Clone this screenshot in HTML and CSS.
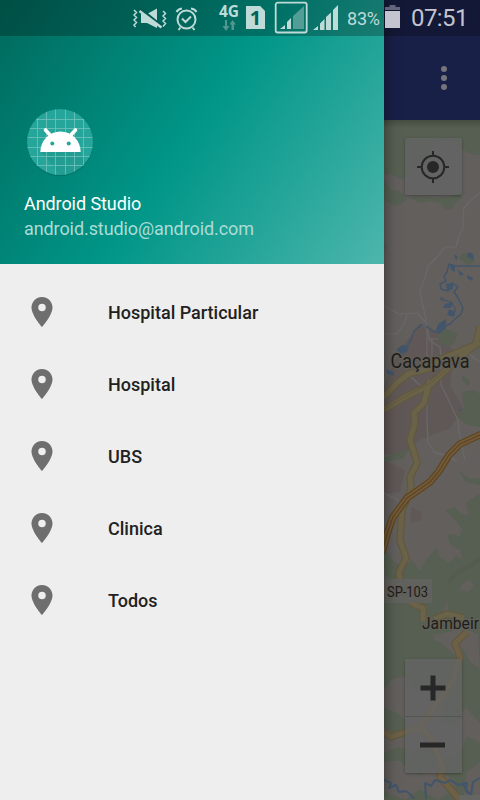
FILE: index.html
```html
<!DOCTYPE html>
<html lang="pt-BR">
<head>
<meta charset="utf-8">
<title>Mapa</title>
<link rel="stylesheet" href="styles.css">
</head>
<body>
<div class="screen">
  <main class="content">
    <header class="toolbar">
      <svg class="more" viewBox="0 0 8 26"><circle cx="4" cy="4" r="3"/><circle cx="4" cy="13" r="3"/><circle cx="4" cy="22" r="3"/></svg>
    </header>
    <section class="map">
      <svg class="tiles" viewBox="384 120 96 680">
        <defs><filter id="soft" x="-10%" y="-10%" width="120%" height="120%"><feGaussianBlur stdDeviation=".6"/></filter></defs>
        <rect x="384" y="120" width="96" height="680" fill="#625f5d"/>
        <g filter="url(#soft)">
        <g fill="#5f5956">
          <path d="M418 325L440 332 455 354 450 385 464 410 450 428 420 440 400 456 384 454 384 385 400 350Z"/>
          <path d="M384 460L405 470 400 492 384 494ZM412 507L421 512 422 520 410 523Z"/>
        </g>
        <g fill="#565e51">
          <path d="M384 120H480V155L471 154 462 149 455 143 448 141 440 140 430 152 422 164 410 170 402 180 396 176 391 174 386 175 384 172Z"/>
          <path d="M384 181L392 190 400 191 407 199 417 196 436 198 452 196 462 190 461 198 456 202 452 209 446 210 441 203 430 201 421 203 409 198 402 203 396 206 390 204 384 199Z"/>
          <path d="M384 243L387 247 384 251ZM459 258L463 253 471 256 475 262 468 265Z"/>
          <path d="M441 325L448 330 458 333 453 345 444 346 438 340ZM463 375L470 382 468 386 462 380ZM462 392L474 390 480 394V427L468 425 458 418 464 407Z"/>
          <path d="M384 458L400 452 410 449 402 459 384 462ZM458 470L470 479 480 478V800H384V602L391 590 390 580 384 573V549L394 562 404 568 412 560 420 571 425 562 437 547 439 556 449 563 456 556 462 560 460 550 450 544 447 534 460 536 462 529 456 521 446 511 454 507 462 514 469 516 466 503 480 493V485L466 482Z"/>
        </g>
        <g fill="#625f5c">
          <path d="M432 635L448 632 462 628 478 634 480 669 470 662 463 648 456 656 442 644Z"/>
          <path d="M384 689L392 679 404 676 414 690 429 684 440 704 456 716 466 708 480 723V743L467 736 461 752 444 758 428 742 416 752 398 747 384 753Z"/>
          <path d="M384 762L406 760 418 775 434 769 450 777 456 789 438 800 420 789 405 800 384 792ZM467 772L480 762V800L464 796Z"/>
          <path d="M462 584L470 579 474 587 468 592 460 590ZM447 601L449 611 443 610ZM436 635L446 634 452 641 445 644 434 640Z"/>
        </g>
        <g fill="#565e51">
          <path d="M384 708L398 713 409 724 401 735 384 728ZM442 710L457 704 462 718 453 727 442 722ZM397 756L410 750 419 765 408 771Z"/>
        </g>
        <path d="M448 582L458 572 470 566 480 559" fill="none" stroke="#525b4e" stroke-width="4"/>
        <g class="lines">
          <g stroke="#6a686a" stroke-width="1.200">
            <path d="M480 193L471 200 464 208 463 216 463 228 459 236 456 247 445 247 437 257 428 266 425 278 420 290 422 303 425 314 427 328 430 341 440 347 441 359 441 385 448 399 458 420 459 432 465 460"/>
            <path d="M384 306L399 314 417 313 425 322M384 334L397 334 404 324 407 315M427 330L427 365M432 338V358M427 384V420L428 443 436 454 450 456 457 461M410 376L424 389M438 339H428"/>
            <path d="M384 493L398 500 402 510M470 354L475 359 480 362M432 451L446 455 456 461"/>
          </g>
          <g stroke="#42546a" stroke-width="1.500">
            <path d="M480 266L466 266 455 266 449 264 447 272 444 276 446 281 440 284 441 289 448 291 452 283 458 287 454 292 457 296 460 302 463 308 461 314 455 319 450 324 443 327 439 333 433 331 426 326M421 325L414 331 411 340 408 345 401 350"/>
            <path d="M443 300L451 302 455 308 454 316" stroke-width="1.200"/>
          </g>
          <g fill="#42546a" stroke="none">
            <path d="M468 252L473 254 474 260 467 257ZM454 254L458 257 456 261ZM450 264L455 267 455 272 451 270ZM467 275L473 278 472 281 467 278ZM458 270L464 274 460 276ZM446 284L453 283 453 289 447 290ZM440 297L445 299 441 301ZM445 304L453 302 451 308 443 308ZM449 309L455 312 453 317 447 315ZM438 324L446 319 446 328 440 333 436 330ZM420 324L424 325 417 328ZM396 350L402 345 409 347 407 352 402 354ZM386 369L394 372 394 376 387 374Z"/>
            <circle cx="460" cy="410" r="1"/>
          </g>
          <g stroke="#625940" stroke-width="7.600">
            <path d="M384 397L396 384 408 374 430 368 441 359 480 343M384 410L405 397 430 385 457 360 476 344 480 326M430 380L424 403 414 413 415 423 410 440 415 456 417 463 410 477 411 490 402 510 400 540 406 558 399 572 402 594 413 604 423 608 423 621M434 619L447 614 464 618M467 632L455 643 460 657 453 680 437 703 420 727 391 737 384 732M420 727L430 737 443 767 440 777 460 800"/>
          </g>
          <g stroke="#6b6248" stroke-width="5">
            <path d="M384 397L396 384 408 374 430 368 441 359 480 343M384 410L405 397 430 385 457 360 476 344 480 326M430 380L424 403 414 413 415 423 410 440 415 456 417 463 410 477 411 490 402 510 400 540 406 558 399 572 402 594 413 604 423 608 423 621M434 619L447 614 464 618"/>
          </g>
          <path d="M467 632L455 643 460 657 453 680 437 703 420 727 391 737 384 732M420 727L430 737 443 767 440 777 460 800" stroke="#6d6046" stroke-width="5"/>
          <path d="M384 409L406 396 432 382 458 360" stroke="#5f573d" stroke-width=".8"/>
          <path d="M382 553L387 534 393 517 407 498 430 482 439 471 449 455 460 444 482 434" stroke="#60441f" stroke-width="7.400"/>
          <path d="M382 553L387 534 393 517 407 498 430 482 439 471 449 455 460 444 482 434" stroke="#705b3c" stroke-width="5"/>
          <path d="M382 553L387 534 393 517 407 498 430 482 439 471 449 455 460 444 482 434" stroke="#60441f" stroke-width="1.200"/>
          <path d="M384 780L391 783 389 788 396 785 399 792 406 791 411 795 414 799M426 799L425 783 431 786 435 780 445 783 450 780 458 785 467 783 466 791 471 795 473 782 480 778M462 783L470 795" stroke="#42546a" stroke-width="2"/>
        </g>
        </g>
        <rect x="384" y="579" width="48" height="24" fill="#61615d"/>
        <rect x="459" y="795" width="21" height="5" fill="#656563"/>
        <g class="labels">
          <text x="390.500" y="367.500" font-size="19.500" textLength="79" lengthAdjust="spacingAndGlyphs">Caçapava</text>
          <text x="387" y="597" font-size="14.500" textLength="41" lengthAdjust="spacingAndGlyphs">SP-103</text>
          <text x="422" y="629" font-size="16.500" textLength="57" lengthAdjust="spacingAndGlyphs">Jambeir</text>
        </g>
      </svg>
      <div class="controls">
        <div class="map-button locate">
          <svg viewBox="0 0 32 32" width="32" height="32"><g fill="none" stroke="#272727" stroke-width="2"><circle cx="16" cy="16" r="11.300"/><path d="M16 0V5M16 27V32M0 16H5M27 16H32"/></g><circle cx="16" cy="16" r="6" fill="#272727"/></svg>
        </div>
        <div class="zoom">
          <div class="map-button plus"><svg viewBox="0 0 26 26" width="26" height="26"><path d="M.5 13H25.500M13 .5V25.500" stroke="#272727" stroke-width="5"/></svg></div>
          <div class="map-button minus"><svg viewBox="0 0 26 26" width="26" height="26"><path d="M0 13H25" stroke="#272727" stroke-width="5"/></svg></div>
        </div>
      </div>
    </section>
  </main>

  <aside class="drawer">
    <header class="account">
      <svg class="avatar" viewBox="0 0 72 72">
        <defs><clipPath id="disc"><circle cx="36" cy="36" r="33"/></clipPath></defs>
        <circle cx="36" cy="37.200" r="33" fill="#006c60" opacity=".65"/>
        <circle cx="36" cy="36" r="33" fill="#26a69a"/>
        <g clip-path="url(#disc)">
          <path d="M17 45.500L36 70 50 70 62 57 56 45.500Z" fill="#209488" opacity=".5"/>
          <path d="M13.500 0V72M22.500 0V72M31.500 0V72M41.500 0V72M50.500 0V72M59.500 0V72M0 13.500H72M0 22.500H72M0 31.500H72M0 41.500H72M0 50.500H72M0 59.500H72" stroke="#69c1b8" stroke-width=".9"/>
        </g>
        <path d="M16.300 46A20.200 20.500 0 0 1 56.700 46Z" fill="#fff"/>
        <path d="M21.500 24L27 30M51.500 24L46 30" stroke="#fff" stroke-width="3.600" stroke-linecap="round"/>
        <circle cx="28.300" cy="37.400" r="2" fill="#26a69a"/><circle cx="44.700" cy="37.400" r="2" fill="#26a69a"/>
      </svg>
      <div class="name">Android Studio</div>
      <div class="mail">android.studio@android.com</div>
    </header>
    <nav class="menu">
      <a class="item"><svg class="pin" viewBox="0 0 24 24"><path d="M12 2C8.130 2 5 5.130 5 9c0 5.250 7 13 7 13s7-7.750 7-13c0-3.870-3.130-7-7-7zm0 9.500a2.500 2.500 0 0 1 0-5 2.500 2.500 0 0 1 0 5z"/></svg><span>Hospital Particular</span></a>
      <a class="item"><svg class="pin" viewBox="0 0 24 24"><path d="M12 2C8.130 2 5 5.130 5 9c0 5.250 7 13 7 13s7-7.750 7-13c0-3.870-3.130-7-7-7zm0 9.500a2.500 2.500 0 0 1 0-5 2.500 2.500 0 0 1 0 5z"/></svg><span>Hospital</span></a>
      <a class="item"><svg class="pin" viewBox="0 0 24 24"><path d="M12 2C8.130 2 5 5.130 5 9c0 5.250 7 13 7 13s7-7.750 7-13c0-3.870-3.130-7-7-7zm0 9.500a2.500 2.500 0 0 1 0-5 2.500 2.500 0 0 1 0 5z"/></svg><span>UBS</span></a>
      <a class="item"><svg class="pin" viewBox="0 0 24 24"><path d="M12 2C8.130 2 5 5.130 5 9c0 5.250 7 13 7 13s7-7.750 7-13c0-3.870-3.130-7-7-7zm0 9.500a2.500 2.500 0 0 1 0-5 2.500 2.500 0 0 1 0 5z"/></svg><span>Clinica</span></a>
      <a class="item"><svg class="pin" viewBox="0 0 24 24"><path d="M12 2C8.130 2 5 5.130 5 9c0 5.250 7 13 7 13s7-7.750 7-13c0-3.870-3.130-7-7-7zm0 9.500a2.500 2.500 0 0 1 0-5 2.500 2.500 0 0 1 0 5z"/></svg><span>Todos</span></a>
    </nav>
  </aside>

  <div class="status">
    <svg class="vibrate" viewBox="133 0 34 36">
      <path d="M141 14H147L157 8.500V28L147 23H141Z" fill="currentColor"/>
      <path d="M140 8.700L162 26.500" stroke="#00594f" stroke-width="3"/>
      <path d="M139.500 11L161.500 27.500" stroke="currentColor" stroke-width="2.600"/>
      <path d="M134 10L136.500 12.500 134 15 136.500 17.500 134 20 136.500 22.500 134 25 135.500 27M163 11L165.500 13.500 163 16 165.500 18.500 163 21 165.500 23.500 163 26.500" fill="none" stroke="currentColor" stroke-width="1.500"/>
    </svg>
    <svg class="alarm" viewBox="175 0 23 36"><g fill="none" stroke="currentColor" stroke-width="2"><circle cx="186.500" cy="19.500" r="9"/><path d="M182 18.500L185.500 22 191 16.500M176.500 12Q178 9 182 8.500M191 8.500Q195 9 196.500 12M180.500 27.500L178.500 30M192.500 27.500L194.500 30"/></g></svg>
    <div class="network"><span>4G</span><svg viewBox="0 0 14 11"><path d="M3 0H5V6H7.500L4 11 .5 6H3ZM9.500 10V4.500H7.500L10.500 0 14 4.500H12V10Z" fill="#4f978f"/></svg></div>
    <div class="sim">1</div>
    <svg class="signal-box" viewBox="274 0 34 36"><rect x="275.700" y="2.700" width="31" height="29.800" rx="2" fill="none" stroke="currentColor" stroke-width="1.800"/><path d="M280 29L285 25V29ZM287 22L291 18V29H287Z" fill="currentColor"/><path d="M293 16L304 6V29H293Z" fill="#529d95"/></svg>
    <svg class="signal" viewBox="313 0 26 36"><path d="M313 30L318 26V30ZM320 23.500L324.500 19V30H320ZM326 17L331 12.500V30H326ZM333 10L338 5V30H333Z" fill="currentColor"/></svg>
    <span class="percent">83%</span>
    <svg class="battery" viewBox="384 0 16 36"><path d="M385 10V7H389.500V5H395.500V7H400V10Z" fill="#62647c"/><path d="M385 11H400V28H385Z" fill="#c3c4cf"/></svg>
    <span class="clock">07:51</span>
  </div>
</div>
</body>
</html>
```
FILE: styles.css
```css
body {
  margin: 0;
  font-family: Roboto, "Liberation Sans", sans-serif;
}

.screen {
  position: relative;
  width: 480px;
  height: 800px;
  overflow: hidden;
}

.content {
  display: flex;
  flex-direction: column;
  height: 100%;
}

.toolbar {
  box-sizing: border-box;
  display: flex;
  justify-content: flex-end;
  height: 120px;
  padding: 65px 32px 0 0;
  background: #192048;
}

.more {
  width: 8px;
  height: 26px;
  fill: #74747a;
}

.map {
  display: grid;
  grid-template-columns: 96px;
  justify-content: end;
  height: 680px;
}

.tiles {
  grid-area: 1 / 1;
  width: 96px;
  height: 680px;
}

.lines {
  fill: none;
  stroke-linejoin: round;
}

.labels {
  font-family: Roboto, sans-serif;
  fill: #1e1d18;
  stroke: #625f58;
  stroke-width: 2px;
  paint-order: stroke;
}

.controls {
  grid-area: 1 / 1;
  z-index: 1;
  box-sizing: border-box;
  display: flex;
  flex-direction: column;
  justify-content: space-between;
  align-items: flex-end;
  padding: 18px 18px 27px 0;
  background: linear-gradient(rgba(0, 0, 0, .2), transparent 8px);
}

.map-button {
  box-sizing: border-box;
  display: flex;
  align-items: center;
  justify-content: center;
  width: 57px;
  height: 57px;
  background: rgba(102, 102, 102, .73);
}

.locate,
.zoom {
  border-radius: 2px;
  box-shadow: 0 1px 3px rgba(0, 0, 0, .3);
}

.locate,
.plus {
  padding-right: 1px;
}

.minus {
  padding-right: 2px;
  border-top: 1px solid #545553;
}

.drawer {
  position: absolute;
  inset: 0 auto 0 0;
  width: 384px;
  background: #eee;
  box-shadow: 0 0 14px rgba(0, 0, 0, .5);
}

.account {
  box-sizing: border-box;
  height: 264px;
  padding: 106px 24px 0;
  background: linear-gradient(124.5deg, #00695c, #009688 50%, #4db6ac);
  color: #fff;
  font-size: 18px;
}

.avatar {
  display: block;
  width: 72px;
  height: 72px;
}

.name {
  margin-top: 14px;
  line-height: 24px;
  letter-spacing: -.08px;
}

.mail {
  margin-top: 1px;
  line-height: 24px;
  letter-spacing: -.09px;
  color: #abdcd6;
}

.menu {
  padding-top: 12px;
}

.item {
  display: flex;
  align-items: center;
  height: 72px;
  padding-left: 24px;
  font-size: 18px;
  font-weight: 500;
  color: #212121;
}

.pin {
  width: 36px;
  height: 36px;
  margin-right: 48px;
  fill: #6e6e6e;
}

.status {
  position: absolute;
  inset: 0 0 auto 0;
  display: flex;
  height: 36px;
  background: rgba(0, 0, 0, .25);
  color: #bedbd8;
}

.status > * {
  flex: none;
}

.vibrate {
  width: 34px;
  margin-left: 133px;
}

.alarm {
  width: 23px;
  margin-left: 8px;
}

.network {
  width: 21px;
  margin-left: 21px;
  padding-top: 4px;
  font: 700 15.5px/15px "Open Sans", sans-serif;
}

.network svg {
  display: block;
  width: 14px;
  height: 11px;
  margin: 1px 0 0 3px;
}

.sim {
  width: 19px;
  height: 23px;
  margin: 6px 0 0 6px;
  background: currentColor;
  clip-path: polygon(0 0, 75% 0, 100% 22%, 100% 100%, 0 100%);
  font: 700 20px/24px "Open Sans", sans-serif;
  text-align: center;
  -webkit-text-fill-color: #006258;
}

.signal-box {
  width: 34px;
  margin-left: 9px;
}

.signal {
  width: 26px;
  margin-left: 5px;
}

.percent {
  width: 37px;
  margin-left: 8px;
  font-size: 18px;
  line-height: 38px;
  letter-spacing: -.2px;
}

.battery {
  width: 16px;
}

.clock {
  margin-left: 11px;
  font-size: 24px;
  line-height: 37px;
  letter-spacing: -.6px;
  color: #c3c4cf;
}
```
